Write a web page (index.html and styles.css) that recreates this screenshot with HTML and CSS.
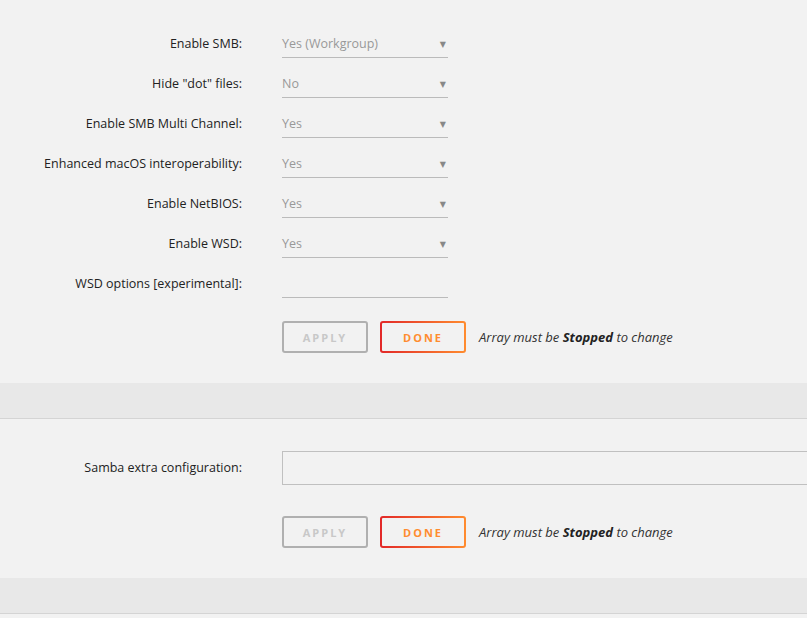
FILE: index.html
```html
<!DOCTYPE html>
<html>
<head>
<meta charset="utf-8">
<link rel="stylesheet" href="styles.css">
</head>
<body>
<section class="panel first">
  <div class="row"><div class="label">Enable SMB:</div><div class="field select"><span class="val">Yes (Workgroup)</span><span class="arrow">▼</span></div></div>
  <div class="row"><div class="label">Hide "dot" files:</div><div class="field select"><span class="val">No</span><span class="arrow">▼</span></div></div>
  <div class="row"><div class="label">Enable SMB Multi Channel:</div><div class="field select"><span class="val">Yes</span><span class="arrow">▼</span></div></div>
  <div class="row"><div class="label">Enhanced macOS interoperability:</div><div class="field select"><span class="val">Yes</span><span class="arrow">▼</span></div></div>
  <div class="row"><div class="label">Enable NetBIOS:</div><div class="field select"><span class="val">Yes</span><span class="arrow">▼</span></div></div>
  <div class="row"><div class="label">Enable WSD:</div><div class="field select"><span class="val">Yes</span><span class="arrow">▼</span></div></div>
  <div class="row"><div class="label">WSD options [experimental]:</div><div class="field"></div></div>
  <div class="actions">
    <span class="btn apply">APPLY</span>
    <span class="btn done">DONE</span>
    <span class="note">Array must be <b>Stopped</b> to change</span>
  </div>
</section>
<div class="band"></div>
<section class="panel second">
  <div class="row tall"><div class="label">Samba extra configuration:</div><div class="textarea"></div></div>
  <div class="actions">
    <span class="btn apply">APPLY</span>
    <span class="btn done">DONE</span>
    <span class="note">Array must be <b>Stopped</b> to change</span>
  </div>
</section>
<div class="band"></div>
</body>
</html>
```
FILE: styles.css
```css
html, body {
  margin: 0;
  padding: 0;
  background: #f2f2f2;
  overflow: hidden;
}
body {
  font-family: "Open Sans", "DejaVu Sans", sans-serif;
  font-size: 12.5px;
  color: #222;
}
.panel {
  padding: 29px 0 30px 0;
}
.panel.second {
  padding-top: 32px;
}
.row {
  display: flex;
  align-items: flex-start;
  height: 40px;
}
.row.tall {
  height: 65px;
}
.label {
  width: 242px;
  text-align: right;
  line-height: 28px;
  padding-top: 1px;
  height: 28px;
  margin-right: 40px;
  flex: none;
}
.row.tall .label {
  line-height: 34px;
  height: 34px;
  padding-top: 0;
}
.field {
  width: 166px;
  height: 28px;
  line-height: 28px;
  border-bottom: 1px solid #bbb;
  display: flex;
  justify-content: space-between;
  align-items: center;
  flex: none;
}
.val {
  color: #999;
  padding-top: 2px;
}
.arrow {
  font-size: 8px;
  color: #888;
  margin-right: 2px;
  padding-top: 2px;
}
.textarea {
  width: 560px;
  height: 32px;
  border: 1px solid #c0c0c0;
  flex: none;
}
.actions {
  display: flex;
  align-items: center;
  margin-top: 12px;
  padding-left: 282px;
  gap: 12px;
}
.row.tall + .actions {
  margin-top: 0;
}
.btn {
  box-sizing: border-box;
  width: 86px;
  height: 32px;
  display: flex;
  align-items: center;
  justify-content: center;
  font-weight: bold;
  font-size: 11px;
  letter-spacing: 2px;
  border-radius: 3px;
}
.btn.apply {
  border: 2px solid #b0b0b0;
  color: #c8c8c8;
}
.btn.done {
  border: 2px solid transparent;
  background: linear-gradient(#f2f2f2, #f2f2f2) padding-box, linear-gradient(90deg, #e22828, #ff8c2f) border-box;
  color: #ff8c2f;
}
.note {
  font-style: italic;
  font-size: 13px;
  color: #333;
  margin-left: 1px;
}
.note b {
  color: #222;
}
.band {
  height: 35px;
  background: #e8e8e8;
  border-bottom: 1px solid #d4d4d4;
}
```
